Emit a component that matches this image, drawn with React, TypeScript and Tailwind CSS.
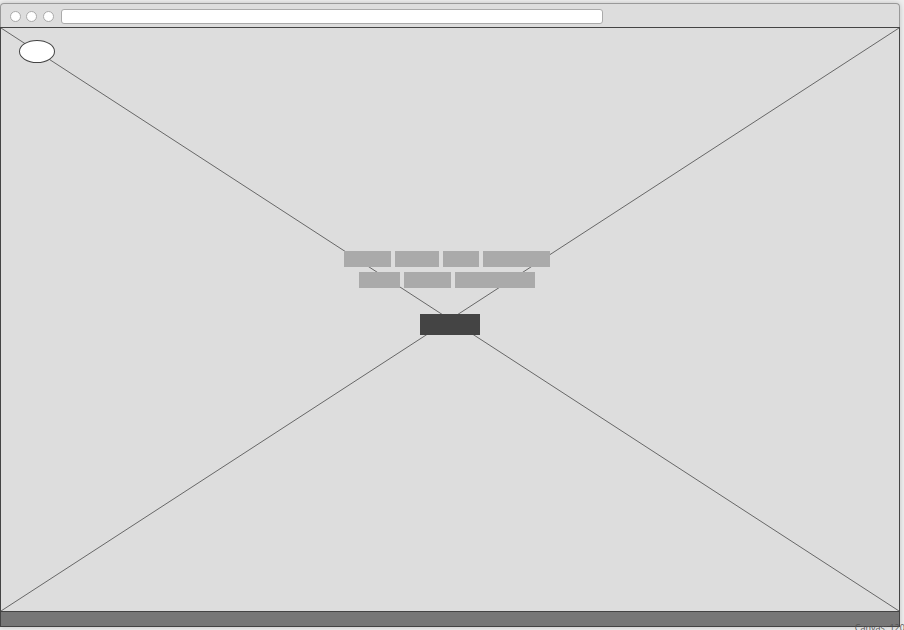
import React from "react";

const headline: string[][] = [
  ["w-[47px]", "w-11", "w-9", "w-[67px]"],
  ["w-[41px]", "w-[47px]", "w-20"],
];

function BrowserBar() {
  return (
    <header className="flex h-6 items-center rounded-t-[4px] border border-b-0 border-[#999] bg-[#ddd] pt-[2px] pl-[9px]">
      <div className="flex gap-[5px]" aria-hidden="true">
        <span className="size-[11px] rounded-full border border-[#aaa] bg-white" />
        <span className="size-[11px] rounded-full border border-[#aaa] bg-white" />
        <span className="ml-px size-[11px] rounded-full border border-[#aaa] bg-white" />
      </div>
      <input
        type="text"
        aria-label="Address"
        className="ml-[7px] h-[15px] w-[61%] rounded-[3px] border border-[#aaa] bg-white px-1 text-[10px] outline-none"
      />
    </header>
  );
}

function Hero() {
  return (
    <main className="relative flex flex-1 flex-col bg-[#ddd]">
      <svg
        className="absolute inset-0 size-full"
        viewBox="0 0 100 100"
        preserveAspectRatio="none"
        aria-hidden="true"
      >
        <path
          d="M0 0 L100 100 M100 0 L0 100"
          fill="none"
          stroke="#666"
          strokeWidth="1"
          vectorEffect="non-scaling-stroke"
        />
      </svg>
      <div className="relative flex flex-1 flex-col items-center justify-center">
        <a
          href="#"
          aria-label="Home"
          className="absolute top-3 left-[18px] h-[23px] w-9 rounded-[50%] border border-[#444] bg-white"
        />
        <div className="flex flex-col items-center gap-[5px] pr-[6px]">
          {headline.map((row, i) => (
            <div key={i} className="flex gap-1">
              {row.map((width, j) => (
                <span key={j} className={`h-4 bg-[#aaa] ${width}`} />
              ))}
            </div>
          ))}
        </div>
        <button
          type="button"
          aria-label="Continue"
          className="mt-[26px] mb-[54px] h-[21px] w-[60px] bg-[#444]"
        />
      </div>
    </main>
  );
}

export default function App() {
  return (
    <div className="relative flex h-screen flex-col overflow-hidden bg-[#eee] pt-[3px] pr-1 pb-[3px]">
      <div className="flex flex-1 flex-col rounded-t-[4px] shadow-[0_0_5px_rgba(0,0,0,0.2)]">
        <BrowserBar />
        <div className="flex flex-1 flex-col border border-[#444]">
          <Hero />
          <footer className="h-[15px] border-t border-[#444] bg-[#777]" />
        </div>
      </div>
      <p className="absolute right-0 bottom-0 -mr-[6px] -mb-1 font-['Open_Sans',sans-serif] text-[9px] leading-3 whitespace-nowrap text-[#555]">
        Canvas: 1200
      </p>
    </div>
  );
}
